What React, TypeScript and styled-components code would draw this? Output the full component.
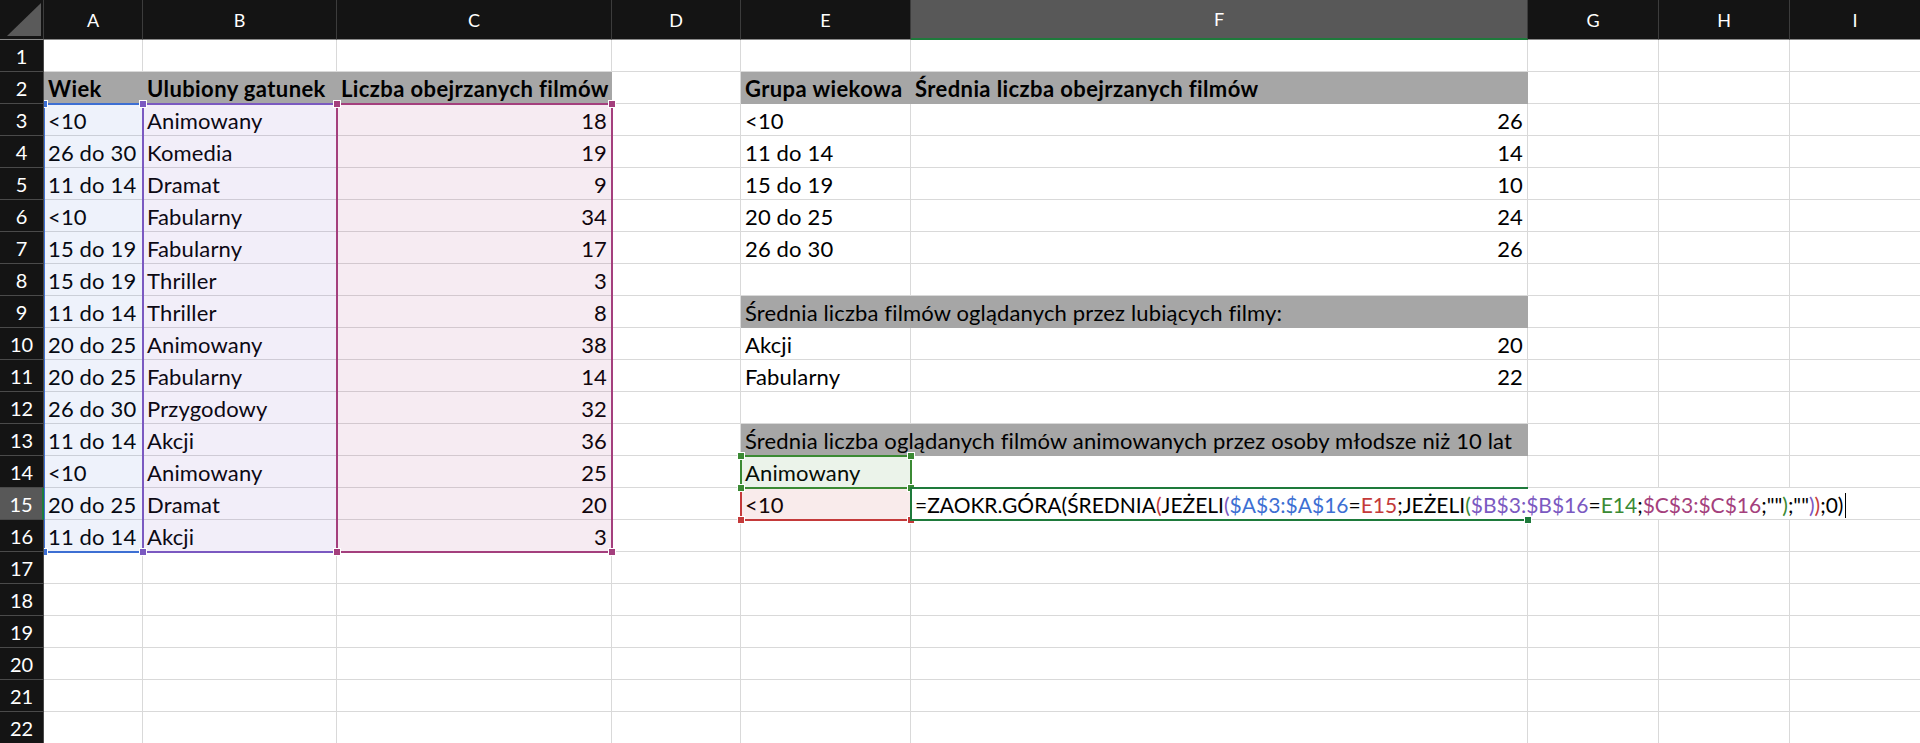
import React from 'react';
import styled, { createGlobalStyle } from 'styled-components';

const GlobalStyle = createGlobalStyle`
  html, body { margin: 0; padding: 0; background: #ffffff; overflow: hidden; }
  #root { width: 1920px; height: 743px; }
`;

const COLS = ['A', 'B', 'C', 'D', 'E', 'F', 'G', 'H', 'I'];
const WIDTHS = [99, 194, 275, 129, 170, 617, 131, 131, 131];
const ROWS = 22;
const ACTIVE_COL = 'F';
const ACTIVE_ROW = 15;

const C = {
  headerBg: '#141414',
  headerActive: '#585858',
  grid: '#d9d9d9',
  gray: '#a6a6a6',
  blue: '#3d6fd3',
  purple: '#7b59c1',
  magenta: '#a43f7d',
  green: '#3b8a34',
  red: '#c43a3a',
  active: '#1e7a3b',
};

type CellData = { t: string; b?: boolean; r?: boolean };

const data: Record<string, CellData> = {
  A2: { t: 'Wiek', b: true },
  B2: { t: 'Ulubiony gatunek', b: true },
  C2: { t: 'Liczba obejrzanych filmów', b: true },
  E2: { t: 'Grupa wiekowa', b: true },
  F2: { t: 'Średnia liczba obejrzanych filmów', b: true },
  E9: { t: 'Średnia liczba filmów oglądanych przez lubiących filmy:' },
  E10: { t: 'Akcji' },
  F10: { t: '20', r: true },
  E11: { t: 'Fabularny' },
  F11: { t: '22', r: true },
  E13: { t: 'Średnia liczba oglądanych filmów animowanych przez osoby młodsze niż 10 lat' },
  E14: { t: 'Animowany' },
  E15: { t: '<10' },
};

const table: [string, string, number][] = [
  ['<10', 'Animowany', 18],
  ['26 do 30', 'Komedia', 19],
  ['11 do 14', 'Dramat', 9],
  ['<10', 'Fabularny', 34],
  ['15 do 19', 'Fabularny', 17],
  ['15 do 19', 'Thriller', 3],
  ['11 do 14', 'Thriller', 8],
  ['20 do 25', 'Animowany', 38],
  ['20 do 25', 'Fabularny', 14],
  ['26 do 30', 'Przygodowy', 32],
  ['11 do 14', 'Akcji', 36],
  ['<10', 'Animowany', 25],
  ['20 do 25', 'Dramat', 20],
  ['11 do 14', 'Akcji', 3],
];
table.forEach(([a, b, c], i) => {
  const r = i + 3;
  data['A' + r] = { t: a };
  data['B' + r] = { t: b };
  data['C' + r] = { t: String(c), r: true };
});

const groups: [string, number][] = [
  ['<10', 26],
  ['11 do 14', 14],
  ['15 do 19', 10],
  ['20 do 25', 24],
  ['26 do 30', 26],
];
groups.forEach(([g, v], i) => {
  const r = i + 3;
  data['E' + r] = { t: g };
  data['F' + r] = { t: String(v), r: true };
});

const grayCells = new Set(['A2', 'B2', 'C2', 'E2', 'F2', 'E9', 'F9', 'E13', 'F13']);

const Sheet = styled.div`
  display: grid;
  grid-template-columns: 44px ${WIDTHS.map((w) => w + 'px').join(' ')};
  grid-template-rows: 40px repeat(${ROWS}, 32px);
  width: 1920px;
  height: 743px;
  overflow: hidden;
  font-family: Lato, 'Liberation Sans', sans-serif;
  color: #000;
`;

type Pos = { $gr: number; $gc: number };

const Corner = styled.div`
  grid-row: 1;
  grid-column: 1;
  position: relative;
  z-index: 5;
  background: ${C.headerBg};
  border-right: 1px solid #3c3c3c;
  border-bottom: 1px solid #8a8a8a;
  box-sizing: border-box;
  svg { display: block; }
`;

const ColHeader = styled.div<Pos & { $active: boolean }>`
  grid-row: ${(p) => p.$gr};
  grid-column: ${(p) => p.$gc};
  position: relative;
  z-index: 5;
  box-sizing: border-box;
  display: flex;
  align-items: center;
  justify-content: center;
  background: ${(p) => (p.$active ? C.headerActive : C.headerBg)};
  color: #fff;
  font-size: 18px;
  border-right: 1px solid #3c3c3c;
  border-bottom: ${(p) => (p.$active ? `2px solid ${C.active}` : '1px solid #8a8a8a')};
`;

const RowHeader = styled.div<Pos & { $active: boolean }>`
  grid-row: ${(p) => p.$gr};
  grid-column: ${(p) => p.$gc};
  position: relative;
  z-index: 5;
  box-sizing: border-box;
  display: flex;
  align-items: center;
  justify-content: center;
  background: ${(p) => (p.$active ? C.headerActive : C.headerBg)};
  color: #fff;
  font-size: 20px;
  border-bottom: 1px solid #4a4a4a;
  border-right: ${(p) => (p.$active ? `2px solid ${C.active}` : '1px solid #4a4a4a')};
`;

const Cell = styled.div<Pos & { $gray: boolean; $right: boolean; $bold: boolean }>`
  grid-row: ${(p) => p.$gr};
  grid-column: ${(p) => p.$gc};
  box-sizing: border-box;
  display: flex;
  align-items: flex-end;
  justify-content: ${(p) => (p.$right ? 'flex-end' : 'flex-start')};
  padding: 0 4px 2px 4px;
  min-width: 0;
  background: ${(p) => (p.$gray ? C.gray : '#fff')};
  border-right: 1px solid ${(p) => (p.$gray ? C.gray : C.grid)};
  border-bottom: 1px solid ${(p) => (p.$gray ? C.gray : C.grid)};
  font-size: 22px;
  line-height: 24px;
  font-weight: ${(p) => (p.$bold ? 700 : 400)};
  letter-spacing: ${(p) => (p.$bold ? '0.4px' : '0.15px')};
  white-space: nowrap;
`;

const CellText = styled.span`
  position: relative;
  z-index: 1;
`;

const EditCell = styled.div<Pos>`
  grid-row: ${(p) => p.$gr};
  grid-column: ${(p) => p.$gc};
  box-sizing: border-box;
  display: flex;
  align-items: stretch;
  min-width: 0;
  border-bottom: 1px solid ${C.grid};
  background: #fff;
`;

const FormulaBox = styled.div`
  position: relative;
  z-index: 4;
  display: flex;
  align-items: flex-end;
  padding: 0 4px 2px 4px;
  background: #fff;
  font-size: 21px;
  line-height: 24px;
  white-space: nowrap;
  width: max-content;
`;

const Caret = styled.span`
  display: inline-block;
  width: 1px;
  height: 25px;
  background: #000;
  margin-left: 2px;
  margin-bottom: -1px;
`;

const Tok = styled.span<{ $c: string }>`
  color: ${(p) => p.$c};
`;

const RangeBox = styled.div<{ $row: string; $col: string; $color: string; $fill: string; $z: number }>`
  grid-row: ${(p) => p.$row};
  grid-column: ${(p) => p.$col};
  position: relative;
  z-index: ${(p) => p.$z};
  margin: -1px;
  border: 2px solid ${(p) => p.$color};
  background: ${(p) => p.$fill};
  pointer-events: none;
`;

const ActiveBox = styled.div<{ $row: string; $col: string }>`
  grid-row: ${(p) => p.$row};
  grid-column: ${(p) => p.$col};
  position: relative;
  z-index: 6;
  margin: -1px 0 -1px -1px;
  border-top: 2px solid ${C.active};
  border-bottom: 2px solid ${C.active};
  border-left: 2px solid ${C.active};
  pointer-events: none;
`;

const Handle = styled.span<{ $color: string; $v: 'top' | 'bottom'; $h: 'left' | 'right'; $inset?: number }>`
  position: absolute;
  width: 6px;
  height: 6px;
  background: ${(p) => p.$color};
  box-shadow: 0 0 0 1px #fff;
  ${(p) => p.$v}: -4px;
  ${(p) => p.$h}: ${(p) => (p.$inset !== undefined ? p.$inset : -4)}px;
`;

const formula: [string, string][] = [
  ['=ZAOKR.GÓRA(ŚREDNIA', '#000'],
  ['(', C.red],
  ['JEŻELI', '#000'],
  ['(', C.purple],
  ['$A$3:$A$16', C.blue],
  ['=', '#000'],
  ['E15', C.red],
  [';JEŻELI', '#000'],
  ['(', C.green],
  ['$B$3:$B$16', C.purple],
  ['=', '#000'],
  ['E14', C.green],
  [';', '#000'],
  ['$C$3:$C$16', C.magenta],
  [';""', '#000'],
  [')', C.green],
  [';""', '#000'],
  [')', C.purple],
  [')', C.red],
  [';0)', '#000'],
];

type Range = { row: string; col: string; color: string; fill: string; z: number };
const ranges: Range[] = [
  { row: '4 / 18', col: '2', color: C.blue, fill: 'rgba(61,111,211,0.09)', z: 2 },
  { row: '4 / 18', col: '3', color: C.purple, fill: 'rgba(123,89,193,0.10)', z: 2 },
  { row: '4 / 18', col: '4', color: C.magenta, fill: 'rgba(164,63,125,0.10)', z: 2 },
  { row: '16', col: '6', color: C.red, fill: 'rgba(196,58,58,0.10)', z: 2 },
  { row: '15', col: '6', color: C.green, fill: 'rgba(59,138,52,0.10)', z: 2 },
];

const Corners: React.FC<{ color: string }> = ({ color }) => (
  <>
    <Handle $color={color} $v="top" $h="left" />
    <Handle $color={color} $v="top" $h="right" />
    <Handle $color={color} $v="bottom" $h="left" />
    <Handle $color={color} $v="bottom" $h="right" />
  </>
);

export default function App() {
  const cells: React.ReactNode[] = [];
  cells.push(
    <Corner key="corner">
      <svg width="43" height="39" viewBox="0 0 43 39">
        <polygon points="7,36 41,36 41,3" fill="#5a5a5a" />
      </svg>
    </Corner>
  );
  COLS.forEach((c, ci) => {
    cells.push(
      <ColHeader key={'h' + c} $gr={1} $gc={ci + 2} $active={c === ACTIVE_COL}>
        {c}
      </ColHeader>
    );
  });
  for (let r = 1; r <= ROWS; r++) {
    cells.push(
      <RowHeader key={'r' + r} $gr={r + 1} $gc={1} $active={r === ACTIVE_ROW}>
        {r}
      </RowHeader>
    );
    COLS.forEach((c, ci) => {
      const id = c + r;
      if (id === 'F15') {
        cells.push(
          <EditCell key={id} $gr={r + 1} $gc={ci + 2}>
            <FormulaBox>
              {formula.map(([t, col], i) => (
                <Tok key={i} $c={col}>
                  {t}
                </Tok>
              ))}
              <Caret />
            </FormulaBox>
          </EditCell>
        );
        return;
      }
      const d = data[id];
      cells.push(
        <Cell
          key={id}
          $gr={r + 1}
          $gc={ci + 2}
          $gray={grayCells.has(id)}
          $right={!!d?.r}
          $bold={!!d?.b}
        >
          {d ? <CellText>{d.t}</CellText> : null}
        </Cell>
      );
    });
  }

  return (
    <>
      <GlobalStyle />
      <Sheet>
        {cells}
        {ranges.map((g, i) => (
          <RangeBox key={'g' + i} $row={g.row} $col={g.col} $color={g.color} $fill={g.fill} $z={g.z}>
            <Corners color={g.color} />
          </RangeBox>
        ))}
        <ActiveBox $row="16" $col="7">
          <Handle $color={C.active} $v="bottom" $h="right" $inset={-3} />
        </ActiveBox>
      </Sheet>
    </>
  );
}
